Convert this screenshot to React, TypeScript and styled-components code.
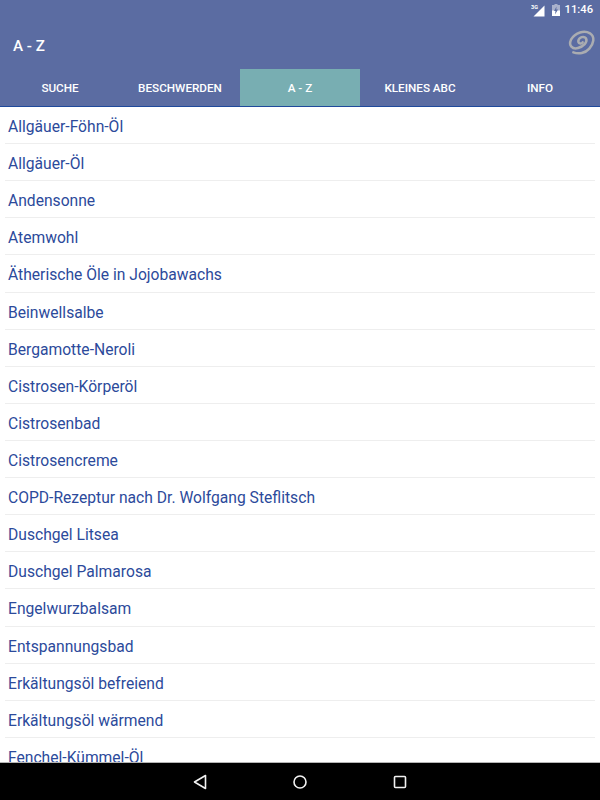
import React from "react";
import styled, { createGlobalStyle } from "styled-components";

const Global = createGlobalStyle`
  html, body { margin: 0; padding: 0; background: #fff; }
  body { font-family: Roboto, "Liberation Sans", sans-serif; }
`;

const Screen = styled.div`
  width: 600px; height: 800px; display: flex; flex-direction: column; overflow: hidden; background: #fff;
`;
const Header = styled.header`
  background: #5b6ca2; flex: none; display: flex; flex-direction: column; height: 107px; box-sizing: border-box;
  border-bottom: 1px solid #1f4a9c;
`;
const StatusBar = styled.div`
  height: 20px; display: flex; align-items: center; justify-content: flex-end; padding-right: 7px; color: #fff;
`;
const SignalIcon = styled.svg`
  width: 14px; height: 14px; margin-bottom: 1px;
`;
const BatteryIcon = styled.svg`
  width: 8px; height: 12px; margin-left: 7px; margin-bottom: 1px;
`;
const Clock = styled.span`
  font-size: 11.2px; font-weight: 500; margin-left: 5px; line-height: 20px;
`;
const ToolBar = styled.div`
  height: 49px; display: flex; align-items: center; justify-content: space-between; padding: 0 4px 0 13px;
`;
const Title = styled.h1`
  margin: 0; color: #fff; font-size: 15.2px; font-weight: 500; position: relative; top: 1px;
`;
const Logo = styled.svg`
  width: 30px; height: 30px; margin-bottom: 3px; fill: none; stroke: #aaacb1; stroke-width: 7.5; stroke-linecap: round;
`;
const Tabs = styled.nav`
  height: 37px; display: grid; grid-template-columns: repeat(5, 1fr);
`;
const Tab = styled.div<{ $active?: boolean }>`
  display: flex; align-items: center; justify-content: center; color: #fff; font-size: 11.7px; font-weight: 500;
  background: ${(p) => (p.$active ? "#78aeb2" : "transparent")};
`;
const List = styled.ul`
  list-style: none; margin: 0; padding: 0 5px 0 5px; flex: 1; min-height: 0; overflow: hidden;
`;
const Item = styled.li`
  height: 37.11px; box-sizing: border-box; border-bottom: 1px solid #eeeeee; padding-left: 3px; color: #2c4a9b;
  font-size: 15.65px; line-height: 39.6px; white-space: nowrap;
`;
const NavBar = styled.div`
  height: 37px; flex: none; background: #000; display: flex; align-items: center; justify-content: center; gap: 80px;
  border-top: 1px solid #b5b5b5; box-sizing: content-box;
`;
const NavIcon = styled.svg`
  width: 20px; height: 20px; fill: none; stroke: #f2f2f2; stroke-width: 1.6;
`;

const items = [
  "Allgäuer-Föhn-Öl", "Allgäuer-Öl", "Andensonne", "Atemwohl", "Ätherische Öle in Jojobawachs",
  "Beinwellsalbe", "Bergamotte-Neroli", "Cistrosen-Körperöl", "Cistrosenbad", "Cistrosencreme",
  "COPD-Rezeptur nach Dr. Wolfgang Steflitsch", "Duschgel Litsea", "Duschgel Palmarosa",
  "Engelwurzbalsam", "Entspannungsbad", "Erkältungsöl befreiend", "Erkältungsöl wärmend", "Fenchel-Kümmel-Öl",
];
const tabs = ["SUCHE", "BESCHWERDEN", "A - Z", "KLEINES ABC", "INFO"];

export default function App() {
  return (
    <Screen>
      <Global />
      <Header>
        <StatusBar>
          <SignalIcon viewBox="0 0 14 14">
            <path d="M13.500 2.500v11H2.500z" fill="#fff" />
            <text x="0" y="5.500" fontSize="5.500" fontWeight="700" fill="#fff" fontFamily="Roboto">3G</text>
          </SignalIcon>
          <BatteryIcon viewBox="0 0 8 12">
            <path d="M2.500 0h3v1H8v11H0V1h2.500z" fill="#aab2cc" />
            <path d="M0 6.500h8V12H0z" fill="#fff" />
            <path d="M4.500 2.500 2 7h1.500L3 10.500 6 5.500H4.300z" fill="#5b6ca2" />
          </BatteryIcon>
          <Clock>11:46</Clock>
        </StatusBar>
        <ToolBar>
          <Title>A - Z</Title>
          <Logo viewBox="0 0 90 90">
            <path d="M22 73C38 79 58 76 70 62C83 47 88 27 72 16C55 6 28 13 15 35C7 52 19 65 36 60C52 55 66 43 60 31C54 23 39 27 37 38C36 47 46 49 50 43" />
          </Logo>
        </ToolBar>
        <Tabs>
          {tabs.map((t) => (
            <Tab key={t} $active={t === "A - Z"}>{t}</Tab>
          ))}
        </Tabs>
      </Header>
      <List>
        {items.map((i) => (
          <Item key={i}>{i}</Item>
        ))}
      </List>
      <NavBar>
        <NavIcon viewBox="0 0 20 20"><path d="M15.500 3.500v13L4.500 10z" strokeLinejoin="round" /></NavIcon>
        <NavIcon viewBox="0 0 20 20"><circle cx="10" cy="10" r="6" /></NavIcon>
        <NavIcon viewBox="0 0 20 20"><rect x="4.500" y="4.500" width="11" height="11" rx="1" /></NavIcon>
      </NavBar>
    </Screen>
  );
}
